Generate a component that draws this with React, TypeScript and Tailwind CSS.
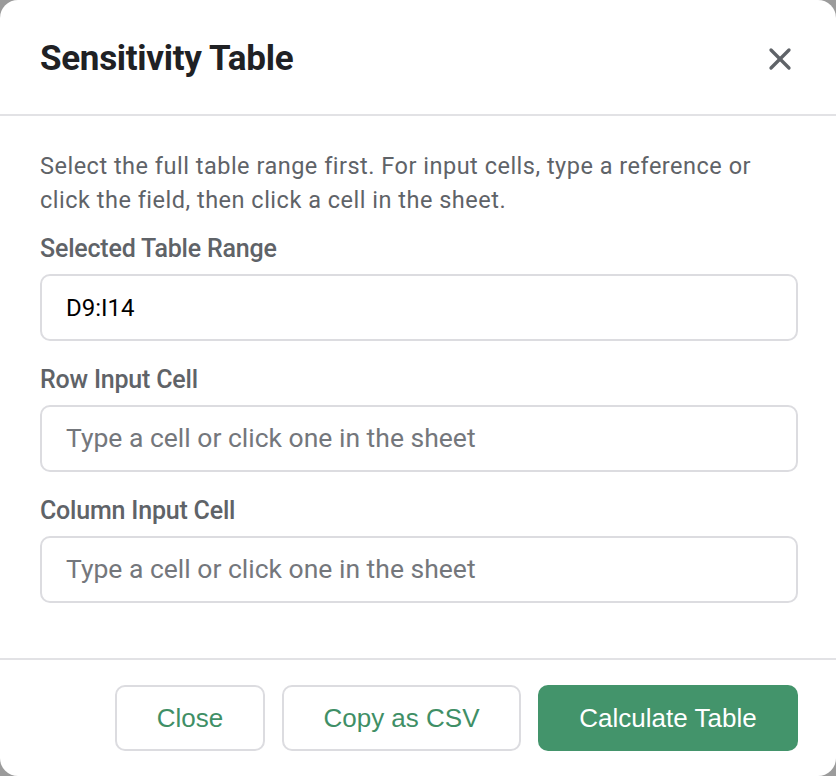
import { X } from "lucide-react";

const Field = ({ label, value, placeholder }: { label: string; value?: string; placeholder?: string }) => (
  <div className="flex flex-col">
    <label className="text-[25px] leading-[30px] font-medium tracking-[-0.2px] text-[#5f6368]">{label}</label>
    <input
      type="text"
      defaultValue={value}
      placeholder={placeholder}
      className="mt-[10px] h-[67px] w-full rounded-[10px] border-2 border-[#dcdce0] bg-white px-[24px] text-[24px] text-black placeholder:text-[26.5px] placeholder:text-[#74777c] outline-none"
    />
  </div>
);

export default function App() {
  return (
    <div className="min-h-screen bg-[#9b9b9b] font-['Roboto',sans-serif]">
      <div className="flex h-[776px] w-full flex-col rounded-[18px] bg-white">
        {/* header */}
        <div className="flex h-[116px] shrink-0 items-center justify-between border-b-2 border-[#e2e2e5] pl-10 pr-[38px] pt-1">
          <h2 className="text-[35px] font-bold tracking-[-0.3px] text-[#202124]">Sensitivity Table</h2>
          <button type="button" aria-label="Close" className="mr-[-2px] flex h-10 w-10 items-center justify-center text-[#5f6368]">
            <X size={36} strokeWidth={2.2} />
          </button>
        </div>

        {/* body */}
        <div className="flex flex-1 flex-col gap-[24px] pl-10 pr-[38px] pt-[33px]">
          <p className="text-[23.5px] leading-[34px] tracking-[0.5px] text-[#5f6368]">
            Select the full table range first. For input cells, type a reference or click the field, then click a cell in the sheet.
          </p>
          <div className="-mt-[7px] flex flex-col gap-[24px]">
            <Field label="Selected Table Range" value="D9:I14" />
            <Field label="Row Input Cell" placeholder="Type a cell or click one in the sheet" />
            <Field label="Column Input Cell" placeholder="Type a cell or click one in the sheet" />
          </div>
        </div>

        {/* footer */}
        <div className="flex h-[118px] shrink-0 items-center justify-end gap-[17px] border-t-2 border-[#e2e2e5] px-[38px] font-['Liberation_Sans',Arial,sans-serif] text-[26px]">
          <button type="button" className="h-[66px] w-[150px] rounded-[10px] border-2 border-[#dcdce0] bg-white text-[#3f8f66]">
            Close
          </button>
          <button type="button" className="h-[66px] w-[239px] rounded-[10px] border-2 border-[#dcdce0] bg-white text-[#3f8f66]">
            Copy as CSV
          </button>
          <button type="button" className="h-[66px] w-[260px] rounded-[10px] bg-[#43946b] text-white">
            Calculate Table
          </button>
        </div>
      </div>
    </div>
  );
}
